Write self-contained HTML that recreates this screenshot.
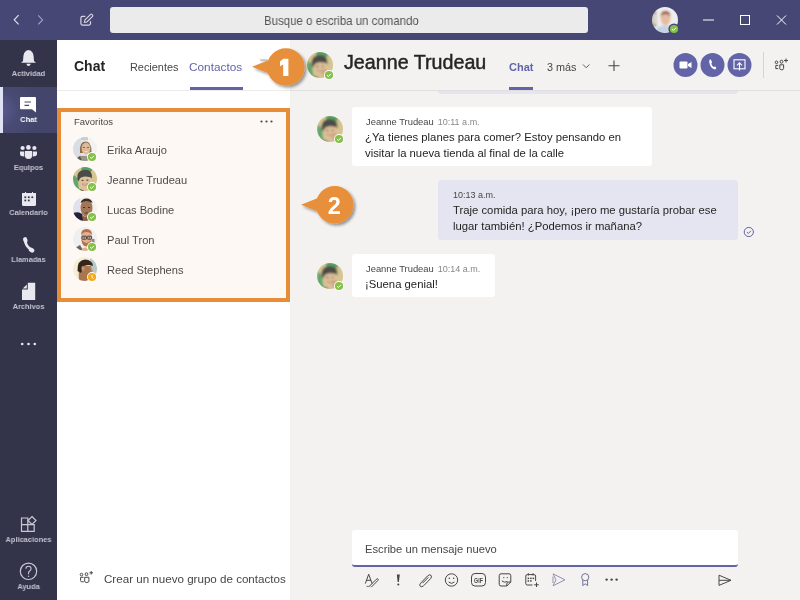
<!DOCTYPE html>
<html><head><meta charset="utf-8">
<style>
*{margin:0;padding:0;box-sizing:border-box}
html,body{-webkit-font-smoothing:antialiased;width:800px;height:600px;overflow:hidden;background:#F3F2F1;font-family:"Liberation Sans",sans-serif;position:relative}
.a{position:absolute}
.t,.nm,.msg,.meta,.rl{will-change:transform}
.t{position:absolute;white-space:nowrap;line-height:1}
.rl{position:absolute;left:0;width:57px;text-align:center;font-size:8px;font-weight:bold;color:#C2C2CE;line-height:1;white-space:nowrap;transform:scaleX(0.93);transform-origin:28.5px 0}
.av{position:absolute}
.nm{position:absolute;left:107px;font-size:11.1px;color:#4E4C4A;line-height:1;white-space:nowrap}
.msg{position:absolute;font-size:11.3px;color:#252423;line-height:16px;white-space:nowrap}
.meta{position:absolute;font-size:9.4px;color:#484644;line-height:1;white-space:nowrap}
.meta span{color:#8A8886;margin-left:4px;font-size:9px}
</style></head><body>
<svg width="0" height="0" style="position:absolute">
 <defs>
  <clipPath id="cc"><circle cx="12" cy="12" r="12"/></clipPath>
  <g id="b-ok"><circle r="5" fill="#fff"/><circle r="4.1" fill="#86BF4A"/><path d="M-2 0.2 L-0.6 1.5 L2 -1.2" fill="none" stroke="#fff" stroke-width="1"/></g>
  <g id="b-away"><circle r="5" fill="#fff"/><circle r="4.1" fill="#F6A81C"/><path d="M0 -2 V0.3 L1.5 1.5" fill="none" stroke="#fff" stroke-width="1"/></g>
  <filter id="bl" x="-20%" y="-20%" width="140%" height="140%"><feGaussianBlur stdDeviation="0.75"/></filter>
  <g id="av-jeanne"><g clip-path="url(#cc)"><g filter="url(#bl)">
    <rect x="-4" y="-4" width="32" height="32" fill="#D6C590"/>
    <path d="M8 -1 H21 Q19 5 15.5 7 L9 6Z" fill="#56A066"/>
    <path d="M0 8 Q4.5 9 5 15 Q5 20 7 24 H0Z" fill="#62A66E"/>
    <ellipse cx="12" cy="14.8" rx="5.8" ry="7.4" fill="#DEC09A"/>
    <path d="M4.3 12.5 Q3.2 3 12 2.8 Q20 3 18.8 11.5 Q17.5 9.6 16 10 Q12 8.6 8 10.6 Q6.2 11.6 5.8 14.5Z" fill="#4C4C47"/>
    <ellipse cx="16.6" cy="19.6" rx="2.5" ry="3.8" fill="#D2A880"/>
    <ellipse cx="9.6" cy="13.4" rx="1.1" ry="0.6" fill="#5A4636"/><ellipse cx="14.4" cy="13.2" rx="1.1" ry="0.6" fill="#5A4636"/>
    <path d="M9 17 Q12 20.2 15 16.8 Q12 17.8 9 17Z" fill="#F6F0E6" stroke="#9A6A55" stroke-width="0.5"/>
    <path d="M4 24 Q7 21.5 10.5 23.5 L11 24Z" fill="#2E2E2E"/>
  </g></g></g>
  <g id="av-erika"><g clip-path="url(#cc)"><g filter="url(#bl)">
    <rect x="-4" y="-4" width="32" height="32" fill="#E4E7EA"/>
    <rect x="0" y="0" width="8" height="24" fill="#D8DEE4"/>
    <rect x="15" y="0" width="9" height="24" fill="#F2F2F2"/>
    <rect x="8" y="0" width="7" height="3" fill="#C8CCD0"/>
    <path d="M7 16 Q6 4.5 12.5 4.5 Q19 4.5 18.5 16Z" fill="#8E6C4C"/>
    <ellipse cx="13" cy="11.5" rx="4.4" ry="6" fill="#DDBA9A"/>
    <ellipse cx="11" cy="10.5" rx="0.9" ry="0.5" fill="#5A4030"/><ellipse cx="15" cy="10.5" rx="0.9" ry="0.5" fill="#5A4030"/>
    <ellipse cx="13" cy="14.6" rx="1.8" ry="0.7" fill="#F0E0D8"/>
    <path d="M2 24 Q4 18 11 19 Q17 18 19 24Z" fill="#9A948C"/>
    <path d="M4 22 L7 19 L9 24 Z" fill="#5A5550"/>
  </g></g></g>
  <g id="av-lucas"><g clip-path="url(#cc)"><g filter="url(#bl)">
    <rect x="-4" y="-4" width="32" height="32" fill="#F3F0F0"/>
    <rect x="0" y="0" width="7" height="17" fill="#E2E0EC"/>
    <ellipse cx="13.5" cy="11" rx="6" ry="9" fill="#A27658"/>
    <path d="M7.5 6 Q8.5 1.5 13.5 1.5 Q18.5 1.5 19.5 6 Q16 4 13.5 4 Q10.5 4 7.5 6Z" fill="#3A2A22"/>
    <ellipse cx="11" cy="10.5" rx="1.1" ry="0.6" fill="#3A2418"/><ellipse cx="16" cy="10.5" rx="1.1" ry="0.6" fill="#3A2418"/>
    <ellipse cx="13.5" cy="16" rx="2" ry="0.8" fill="#6A4030"/>
    <path d="M0 16 Q6 14 9 17 L11 24 H0Z" fill="#23233A"/>
    <path d="M9 18 Q13 22 18 18 L19 24 H10Z" fill="#8A5E44"/>
  </g></g></g>
  <g id="av-paul"><g clip-path="url(#cc)"><g filter="url(#bl)">
    <rect x="-4" y="-4" width="32" height="32" fill="#EFEFEF"/>
    <rect x="19" y="12" width="2.5" height="4" fill="#8A8A80"/>
    <ellipse cx="13.5" cy="11" rx="5.6" ry="7.5" fill="#E2B090"/>
    <path d="M8 8 Q8 2 13.5 2 Q19 2 19 8 Q17 5 13.5 5 Q10 5 8 8Z" fill="#B4704A"/>
    <path d="M8.5 12.5 Q9 19.5 13.5 19.5 Q18 19.5 18.5 12.5 Q16 16 13.5 16 Q11 16 8.5 12.5Z" fill="#B8714A"/>
    <rect x="9" y="9.2" width="4.4" height="3" rx="0.6" fill="#D8B8A0" stroke="#333" stroke-width="0.9"/>
    <rect x="14.2" y="9.2" width="4.4" height="3" rx="0.6" fill="#D8B8A0" stroke="#333" stroke-width="0.9"/>
    <ellipse cx="11.2" cy="10.8" rx="0.8" ry="0.5" fill="#4A3A30"/><ellipse cx="16.4" cy="10.8" rx="0.8" ry="0.5" fill="#4A3A30"/>
    <path d="M3 24 Q5 20 13 20.5 Q20 20 21 24Z" fill="#F6F6F6"/>
    <path d="M2 21 L7 18 L10 23 L5 24Z" fill="#6A6560"/>
    <ellipse cx="12" cy="22.5" rx="3" ry="2" fill="#E2B090"/>
  </g></g></g>
  <g id="av-reed"><g clip-path="url(#cc)"><g filter="url(#bl)">
    <rect x="-4" y="-4" width="32" height="32" fill="#F5EED4"/>
    <rect x="17" y="0" width="7" height="24" fill="#B8C8C8"/>
    <path d="M6 24 Q5 14 7 9 Q11 8 18 9 Q20 14 19 20 Q15 24 12 24Z" fill="#A8774F"/>
    <path d="M4.5 14 Q4 3 12 2.5 Q19.5 3 20 9 Q16 7.5 12 8.5 Q10 9 9.5 12 L8 16Z" fill="#34261E"/>
    <ellipse cx="10" cy="11.5" rx="1.6" ry="2.4" fill="#C89070"/>
    <path d="M17 10 Q21 12 19 17 L18 13Z" fill="#C8946E"/>
  </g></g></g>
  <g id="av-me"><g clip-path="url(#cc)"><g filter="url(#bl)">
    <rect x="-4" y="-4" width="32" height="32" fill="#EEEEEE"/>
    <rect x="0" y="4" width="4" height="14" fill="#A08868"/>
    <rect x="1" y="6" width="2.5" height="10" fill="#E4E0D8"/>
    <ellipse cx="12.5" cy="11" rx="4.5" ry="5.8" fill="#E4BCA0"/>
    <path d="M8 9.5 Q7.5 3.5 12.5 3.5 Q17.5 3.5 17 9.5 Q15.5 6.5 12.5 6.5 Q9.5 6.5 8 9.5Z" fill="#9A6040"/>
    <path d="M2 24 Q4 16.5 12 17 Q20 16.5 22 24Z" fill="#C4D2E2"/>
  </g></g></g>
 </defs>
</svg>

<!-- ========== TITLE BAR ========== -->
<div class="a" style="left:0;top:0;width:800px;height:40px;background:#464775"></div>
<svg class="a" style="left:0;top:0" width="800" height="40">
  <path d="M18.6 15.2 L14.2 19.8 L18.6 24.4" fill="none" stroke="#E8E8F0" stroke-width="1.1"/>
  <path d="M38.2 15.4 L42.6 19.9 L38.2 24.4" fill="none" stroke="#A3A3C6" stroke-width="1.1"/>
  <path d="M85.3 16.4 H82.4 Q80.9 16.4 80.9 17.9 V23.6 Q80.9 25.1 82.4 25.1 H89 Q90.5 25.1 90.5 23.6 V21.2" fill="none" stroke="#D8D8E6" stroke-width="1.2"/>
  <path d="M84.4 22.3 L85 19.9 L90.6 14.3 Q91.2 13.7 91.9 14.4 L92.6 15.1 Q93.2 15.8 92.6 16.4 L86.9 22 Z" fill="none" stroke="#D8D8E6" stroke-width="1.1"/>
  <path d="M703 20 H714" stroke="#fff" stroke-width="1"/>
  <rect x="740.5" y="15.5" width="9" height="9" fill="none" stroke="#fff" stroke-width="1"/>
  <path d="M777 15.5 L786 24.5 M786 15.5 L777 24.5" stroke="#fff" stroke-width="1"/>
</svg>
<div class="a" style="left:110px;top:7px;width:478px;height:26px;background:#EBEBEB;border-radius:3px"></div>
<div class="t" style="left:264px;top:15px;font-size:12.8px;color:#555;transform:scaleX(0.895);transform-origin:0 0">Busque o escriba un comando</div>
<svg class="av" style="left:652px;top:7px" width="26" height="26" viewBox="0 0 24 24"><use href="#av-me"/></svg>
<svg class="a" style="left:664px;top:19px" width="16" height="16"><circle cx="10" cy="10" r="5.6" fill="#464775"/><circle cx="10" cy="10" r="4.1" fill="#86BF4A"/><path d="M8 10.2 L9.4 11.5 L12 8.8" fill="none" stroke="#fff" stroke-width="1"/></svg>

<!-- ========== LEFT RAIL ========== -->
<div class="a" style="left:0;top:40px;width:57px;height:560px;background:#33344A"></div>
<div class="a" style="left:0;top:87px;width:57px;height:46px;background:radial-gradient(ellipse 40px 40px at 0% 50%,#5B5C92 0,#4A4B74 45%,#44456A 100%)"></div>
<div class="a" style="left:0;top:87px;width:3px;height:46px;background:#E2E2F6"></div>
<svg class="a" style="left:0;top:40px" width="57" height="560">
  <g fill="#E8E8EE">
   <!-- bell -->
   <path d="M23 21 Q23 10 28.5 10 Q34 10 34 21 L36 22.8 H21 Z"/>
   <path d="M26.3 23.8 H30.8 Q30 26 28.5 26 Q27 26 26.3 23.8Z"/>
  </g>
  <!-- chat -->
  <path d="M21 57 H35 Q36 57 36 58 V72.5 L32 69.3 H21 Q20 69.3 20 68.3 V58 Q20 57 21 57Z" fill="#FFFFFF"/>
  <path d="M24.5 62 H31 M24.5 65.4 H29" stroke="#47486F" stroke-width="1.1"/>
  <g fill="#E8E8EE">
   <!-- teams -->
   <circle cx="22.6" cy="108" r="2.1"/><circle cx="28.4" cy="107.4" r="2.3"/><circle cx="34.4" cy="108" r="2.1"/>
   <path d="M20 111.5 H24.3 V116.5 Q20 116.5 20 114Z"/>
   <path d="M25 111 H32 V116 Q32 119 28.5 119 Q25 119 25 116Z"/>
   <path d="M32.7 111.5 H37 V114 Q37 116.5 32.7 116.5Z"/>
   <!-- calendar -->
   <path d="M22 153 H36 V164.5 Q36 166 34.5 166 H23.5 Q22 166 22 164.5Z"/>
   <!-- phone -->
   <path d="M25.2 199.5 Q25 206.5 32.3 210.3" fill="none" stroke="#E8E8EE" stroke-width="2.6" stroke-linecap="round"/><ellipse cx="25.3" cy="200" rx="2.1" ry="2.9" transform="rotate(-15 25.3 200)"/><ellipse cx="31.6" cy="210.1" rx="2.9" ry="2.2" transform="rotate(30 31.6 210.1)"/>
   <!-- file -->
   <path d="M27.8 242.8 H35.2 V260 H22 V249.6 H27.8Z"/><path d="M22.8 248.6 L26.8 244.4 V248.6Z"/>
   <!-- dots -->
   <circle cx="22.2" cy="304" r="1.3"/><circle cx="28.5" cy="304" r="1.3"/><circle cx="34.8" cy="304" r="1.3"/>
  </g>
  <g fill="#33344A">
   <rect x="24.4" y="156.4" width="1.8" height="1.7"/><rect x="27.9" y="156.4" width="1.8" height="1.7"/><rect x="31.4" y="156.4" width="1.8" height="1.7"/>
   <rect x="24.4" y="159.6" width="1.8" height="1.7"/><rect x="27.9" y="159.6" width="1.8" height="1.7"/>
  </g>
  <path d="M25.5 152 V154 M32.5 152 V154" stroke="#E8E8EE" stroke-width="1"/>
  <!-- apps -->
  <g fill="none" stroke="#C8C8D4" stroke-width="1.2">
   <path d="M21.5 478 H27.8 V484.6 H21.5 Z M21.5 484.6 V491.4 H27.8 V484.6 M27.8 491.4 H34.2 V484.6 H27.8"/>
   <path d="M32 476.5 L36 480.5 L32 484.5 L28 480.5Z"/>
   <circle cx="28.5" cy="531.3" r="8.2"/>
  </g>
  <path d="M25.9 528.8 Q25.9 526.2 28.5 526.2 Q31.1 526.2 31.1 528.6 Q31.1 530.2 29.4 531.2 Q28.5 531.8 28.5 533.3 V534.2" fill="none" stroke="#C8C8D4" stroke-width="1.1"/><circle cx="28.5" cy="536.2" r="0.7" fill="#C8C8D4"/>
</svg>
<div class="rl" style="top:69.5px">Actividad</div>
<div class="rl" style="top:116px;color:#fff">Chat</div>
<div class="rl" style="top:163.5px">Equipos</div>
<div class="rl" style="top:209px">Calendario</div>
<div class="rl" style="top:256px">Llamadas</div>
<div class="rl" style="top:303px">Archivos</div>
<div class="rl" style="top:536px">Aplicaciones</div>
<div class="rl" style="top:583px">Ayuda</div>

<!-- ========== LIST PANEL ========== -->
<div class="a" style="left:57px;top:40px;width:233px;height:560px;background:#fff"></div>
<div class="a" style="left:57px;top:90px;width:233px;height:1px;background:#EDEBE9"></div>
<div class="t" style="left:74px;top:59px;font-size:14px;font-weight:bold;color:#252423">Chat</div>
<div class="t" style="left:130px;top:62px;font-size:10.9px;color:#484644">Recientes</div>
<div class="t" style="left:189px;top:62px;font-size:11.8px;color:#6264A7">Contactos</div>
<div class="a" style="left:190px;top:87px;width:53px;height:3px;background:#6264A7"></div>

<div class="a" style="left:57px;top:108px;width:233px;height:194px;border:4px solid #E88D37;background:#FDF8F4"></div>
<div class="t" style="left:73.5px;top:117px;font-size:9.5px;color:#484644">Favoritos</div>
<svg class="a" style="left:259px;top:119px" width="18" height="6"><circle cx="2.5" cy="2.5" r="1.1" fill="#484644"/><circle cx="7.5" cy="2.5" r="1.1" fill="#484644"/><circle cx="12.5" cy="2.5" r="1.1" fill="#484644"/></svg>

<svg class="av" style="left:73px;top:137px" width="24" height="24" viewBox="0 0 24 24"><use href="#av-erika"/></svg>
<svg class="av" style="left:73px;top:167px" width="24" height="24" viewBox="0 0 24 24"><use href="#av-jeanne"/></svg>
<svg class="av" style="left:73px;top:197px" width="24" height="24" viewBox="0 0 24 24"><use href="#av-lucas"/></svg>
<svg class="av" style="left:73px;top:227px" width="24" height="24" viewBox="0 0 24 24"><use href="#av-paul"/></svg>
<svg class="av" style="left:73px;top:257px" width="24" height="24" viewBox="0 0 24 24"><use href="#av-reed"/></svg>
<svg class="a" style="left:82px;top:147px" width="20" height="140">
  <use href="#b-ok" x="10" y="10"/><use href="#b-ok" x="10" y="40"/><use href="#b-ok" x="10" y="70"/><use href="#b-ok" x="10" y="100"/><use href="#b-away" x="10" y="130"/>
</svg>
<div class="nm" style="top:145px">Erika Araujo</div>
<div class="nm" style="top:175px">Jeanne Trudeau</div>
<div class="nm" style="top:205px">Lucas Bodine</div>
<div class="nm" style="top:235px">Paul Tron</div>
<div class="nm" style="top:265px">Reed Stephens</div>

<svg class="a" style="left:70px;top:565px" width="30" height="24">
  <g transform="translate(-70 -565)" fill="none" stroke="#484644" stroke-width="1">
   <circle cx="81.5" cy="574.6" r="1.3"/><circle cx="86.5" cy="574.2" r="1.4"/>
   <path d="M83.6 577.3 H80.6 V580.6 Q80.6 581.8 81.8 581.8 H83.8"/>
   <path d="M84.7 577.3 H88.9 V581.2 Q88.9 582.5 86.8 582.5 Q84.7 582.5 84.7 581.2 Z"/>
   <path d="M91.2 571 V574.6 M89.4 572.8 H93"/>
  </g>
</svg>
<div class="t" style="left:104px;top:573px;font-size:11.6px;color:#484644">Crear un nuevo grupo de contactos</div>

<!-- ========== MAIN ========== -->
<div class="a" style="left:290px;top:40px;width:510px;height:560px;background:#F3F2F1"></div>
<div class="a" style="left:290px;top:90px;width:510px;height:1px;background:#E1DFDD"></div>
<div class="a" style="left:438px;top:91px;width:300px;height:3px;background:#E5E5F1;border-radius:0 0 3px 3px"></div>

<svg class="av" style="left:307px;top:52px" width="26" height="26" viewBox="0 0 24 24"><use href="#av-jeanne"/></svg>
<svg class="a" style="left:319px;top:65px" width="20" height="20"><use href="#b-ok" x="10" y="10"/></svg>
<div class="t" style="left:344px;top:53.2px;font-size:19.7px;color:#252423;-webkit-text-stroke:0.45px #252423">Jeanne Trudeau</div>

<div class="t" style="left:508.5px;top:62px;font-size:11px;font-weight:bold;color:#6264A7">Chat</div>
<div class="a" style="left:509px;top:87px;width:24px;height:3px;background:#6264A7"></div>
<div class="t" style="left:547px;top:62px;font-size:10.8px;color:#484644">3 más</div>
<svg class="a" style="left:580px;top:60px" width="50" height="16">
  <path d="M3 4.5 L6.2 7.8 L9.4 4.5" fill="none" stroke="#605E5C" stroke-width="1"/>
  <path d="M34 0.5 V11 M28.5 5.8 H39.5" stroke="#484644" stroke-width="1.1"/>
</svg>

<svg class="a" style="left:670px;top:50px" width="130" height="30">
  <circle cx="15.5" cy="15" r="12" fill="#6264A7"/>
  <circle cx="42.5" cy="15" r="12" fill="#6264A7"/>
  <circle cx="69.5" cy="15" r="12" fill="#6264A7"/>
  <rect x="9.5" y="11.5" width="8" height="7" rx="1" fill="#fff"/>
  <path d="M18 14 L21.5 12 V18 L18 16Z" fill="#fff"/>
  <path d="M39.5 9.8 Q40.5 9 41.2 10 L42 12.6 Q41.8 13.3 41.2 13.7 Q42.2 16 43.8 17.1 Q44.4 16.6 45 16.5 L46.2 17.5 Q46.5 18.8 45.2 19.4 Q41.5 19 39.8 14.5 Q38.8 11.5 39.5 9.8Z" fill="#fff"/>
  <rect x="64" y="9.8" width="11" height="9" fill="none" stroke="#fff" stroke-width="1.1"/>
  <path d="M69.5 20.5 V13 M67 15.3 L69.5 12.8 L72 15.3" fill="none" stroke="#fff" stroke-width="1.1"/>
  <path d="M93.5 2 V28" stroke="#D6D4D2" stroke-width="1"/>
  <g fill="none" stroke="#484644" stroke-width="1" transform="translate(-670 -50)">
   <circle cx="776.5" cy="62.3" r="1.3"/><circle cx="781.5" cy="61.7" r="1.45"/>
   <path d="M778.2 65.4 H775.8 V68.6 H778.2"/>
   <path d="M779.8 64.8 H783.6 V68.6 Q783.6 69.8 781.7 69.8 Q779.8 69.8 779.8 68.6 Z"/>
   <path d="M786 58.5 V62.5 M784 60.5 H788"/>
  </g>
</svg>

<!-- messages -->
<div class="a" style="left:352px;top:107px;width:300px;height:59px;background:#fff;border-radius:3px"></div>
<svg class="av" style="left:317px;top:116px" width="26" height="26" viewBox="0 0 24 24"><use href="#av-jeanne"/></svg>
<svg class="a" style="left:329px;top:129px" width="20" height="20"><use href="#b-ok" x="10" y="10"/></svg>
<div class="meta" style="left:365.5px;top:117px">Jeanne Trudeau<span>10:11 a.m.</span></div>
<div class="msg" style="left:365px;top:129px">¿Ya tienes planes para comer? Estoy pensando en<br>visitar la nueva tienda al final de la calle</div>

<div class="a" style="left:438px;top:180px;width:300px;height:60px;background:#E5E5F1;border-radius:3px"></div>
<div class="meta" style="left:452.5px;top:190px"><span style="margin:0;color:#484644">10:13 a.m.</span></div>
<div class="msg" style="left:452.5px;top:202px">Traje comida para hoy, ¡pero me gustaría probar ese<br>lugar también! ¿Podemos ir mañana?</div>
<svg class="a" style="left:742px;top:226px" width="14" height="14"><circle cx="6.8" cy="6" r="4.6" fill="none" stroke="#6264A7" stroke-width="1"/><path d="M4.8 6.1 L6.3 7.5 L8.9 4.8" fill="none" stroke="#6264A7" stroke-width="1"/></svg>

<div class="a" style="left:352px;top:254px;width:143px;height:43px;background:#fff;border-radius:3px"></div>
<svg class="av" style="left:317px;top:263px" width="26" height="26" viewBox="0 0 24 24"><use href="#av-jeanne"/></svg>
<svg class="a" style="left:329px;top:276px" width="20" height="20"><use href="#b-ok" x="10" y="10"/></svg>
<div class="meta" style="left:365.5px;top:264px">Jeanne Trudeau<span>10:14 a.m.</span></div>
<div class="msg" style="left:365px;top:276px">¡Suena genial!</div>

<!-- compose -->
<div class="a" style="left:352px;top:530px;width:386px;height:37px;background:#fff;border-radius:3px;border-bottom:2px solid #6264A7"></div>
<div class="t" style="left:365px;top:544px;font-size:11.2px;color:#484644">Escribe un mensaje nuevo</div>

<svg class="a" style="left:352px;top:568px;will-change:transform" width="400" height="24">
 <g transform="translate(-352 -568)">
 <g fill="none" stroke="#484644" stroke-width="1">
  <!-- format A -->
  <path d="M365.3 583.6 L368.7 574.2 L372.1 583.6 M366.4 580.3 H371"/>
  <path d="M369.8 585.8 L376.3 579.3 Q377.3 578.3 378 579 Q378.7 579.7 377.7 580.7 L371.2 587.2"/>
  <path d="M366.5 586.3 Q368.5 587 370.5 585.8" stroke-width="0.8"/>
  <!-- paperclip -->
  <path d="M422.5 583.2 L428.3 577.4 M423.5 586 Q421.5 587.5 420.3 586.3 Q419 585 420.6 583.2 L427.5 576 Q429.5 574 431 575.3 Q432.3 576.8 430.5 578.7 L423.7 585.7"/>
  <!-- emoji -->
  <circle cx="451.5" cy="580" r="6.2"/>
  <path d="M448.6 582 Q451.5 584.8 454.4 582"/>
  <!-- gif -->
  <path d="M475 573.5 H482 Q485.5 573.5 485.5 577 V582.5 Q485.5 586 482 586 H475 Q471.5 586 471.5 582.5 V577 Q471.5 573.5 475 573.5Z"/>
  <!-- sticker -->
  <path d="M501 573.8 H509 Q510.8 573.8 510.8 575.6 V582 L506.8 586 H501 Q499.2 586 499.2 584.2 V575.6 Q499.2 573.8 501 573.8Z"/>
  <path d="M501.8 580.8 Q504 583.2 507.5 581.5 M506.8 586 V584 Q506.8 582 508.8 582 H510.8"/>
  <!-- schedule -->
  <path d="M535.6 581 V576 Q535.6 574.6 534.2 574.6 H527.2 Q525.8 574.6 525.8 576 V583.6 Q525.8 585 527.2 585 H532.5"/>
  <path d="M528.3 573.2 V575.6 M533 573.2 V575.6 M536.5 582.5 V587 M534.2 584.8 H538.8"/>
  <!-- praise -->
  <g stroke="#6F7096"><circle cx="585.2" cy="577.2" r="3.6"/>
  <path d="M582.8 580 V585.6 L585.2 583.8 L587.6 585.6 V580"/></g>
  <!-- send -->
  <path d="M719 575.2 L731 580.3 L719 585.4 Z M719 580.3 H731"/>
 </g>
 <g fill="#484644">
  <path d="M396.8 574.4 H399.8 L398.9 582 H397.7Z"/><circle cx="398.3" cy="584.5" r="1.05"/>
  <circle cx="449.3" cy="578.3" r="0.75"/><circle cx="453.7" cy="578.3" r="0.75"/>
  <circle cx="503.8" cy="577.6" r="0.65"/><circle cx="507.3" cy="577.6" r="0.65"/>
  <circle cx="606.6" cy="579.6" r="1.2"/><circle cx="611.6" cy="579.6" r="1.2"/><circle cx="616.6" cy="579.6" r="1.2"/>
  <rect x="527.6" y="577.6" width="1.5" height="1.5"/><rect x="530.1" y="577.6" width="1.5" height="1.5"/><rect x="532.6" y="577.6" width="1.5" height="1.5"/>
  <rect x="527.6" y="580.2" width="1.5" height="1.5"/><rect x="530.1" y="580.2" width="1.5" height="1.5"/>
 </g>
 <text x="478.5" y="582.8" font-size="6.6" font-weight="bold" fill="#484644" text-anchor="middle" font-family="Liberation Sans" transform="translate(478.5 0) scale(0.8 1) translate(-478.5 0)">GIF</text>
 <g fill="none" stroke="#8F90AE" stroke-width="1">
  <path d="M553 573.8 L565 579.8 L553 585.8 L556 579.8Z M553 576.5 V583"/>
 </g>
 </g>
</svg>

<svg class="a" style="left:255px;top:55px" width="20" height="12"><path d="M4.5 4.2 H13 L12 6.5 H6Z" fill="#C4C4C4"/></svg>
<!-- ========== CALLOUTS ========== -->
<svg class="a" style="left:240px;top:40px;will-change:transform" width="130" height="200">
 <defs>
  <filter id="sh" x="-30%" y="-30%" width="160%" height="160%"><feGaussianBlur in="SourceAlpha" stdDeviation="1.5"/><feOffset dx="1.8" dy="2.2"/><feComponentTransfer><feFuncA type="linear" slope="0.4"/></feComponentTransfer><feMerge><feMergeNode/><feMergeNode in="SourceGraphic"/></feMerge></filter>
 </defs>
 <g filter="url(#sh)" fill="#E88F3A">
  <circle cx="45.8" cy="27" r="18.8"/>
  <path d="M12 26.8 L29 20 L29 33.6 Z"/>
  <circle cx="94.7" cy="164.8" r="18.8"/>
  <path d="M61 164.8 L78 158 L78 171.6 Z"/>
 </g>
 <path d="M43.2 18.8 H48.4 V36 H43.2 V24.6 L40 26.2 V21.4 Z" fill="#fff"/>
 <text x="94.3" y="174" font-size="23.5" font-weight="bold" fill="#fff" text-anchor="middle" font-family="Liberation Sans">2</text>
</svg>

</body></html>
